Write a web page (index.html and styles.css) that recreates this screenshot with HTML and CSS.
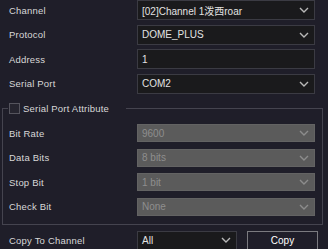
FILE: index.html
```html
<!DOCTYPE html>
<html lang="en">
<head>
<meta charset="UTF-8">
<meta name="viewport" content="width=device-width, initial-scale=1.0">
<title>PTZ Settings</title>
<link rel="stylesheet" href="styles.css">
</head>
<body>

<div class="panel">
    <div class="row">
        <div class="label">Channel</div>
        <div class="select">
            <span>[02]Channel 1泼西roar</span>
            <svg class="chev" width="10" height="6" viewBox="0 0 10 6"><polyline points="1,1 5,5 9,1"/></svg>
        </div>
    </div>
    <div class="row">
        <div class="label">Protocol</div>
        <div class="select">
            <span>DOME_PLUS</span>
            <svg class="chev" width="10" height="6" viewBox="0 0 10 6"><polyline points="1,1 5,5 9,1"/></svg>
        </div>
    </div>
    <div class="row">
        <div class="label">Address</div>
        <div class="select">
            <span>1</span>
        </div>
    </div>
    <div class="row">
        <div class="label">Serial Port</div>
        <div class="select">
            <span>COM2</span>
            <svg class="chev" width="10" height="6" viewBox="0 0 10 6"><polyline points="1,1 5,5 9,1"/></svg>
        </div>
    </div>

    <fieldset class="attr">
        <legend><span class="check"></span>Serial Port Attribute</legend>
        <div class="row">
            <div class="label">Bit Rate</div>
            <div class="select disabled">
                <span>9600</span>
                <svg class="chev" width="10" height="6" viewBox="0 0 10 6"><polyline points="1,1 5,5 9,1"/></svg>
            </div>
        </div>
        <div class="row">
            <div class="label">Data Bits</div>
            <div class="select disabled">
                <span>8 bits</span>
                <svg class="chev" width="10" height="6" viewBox="0 0 10 6"><polyline points="1,1 5,5 9,1"/></svg>
            </div>
        </div>
        <div class="row">
            <div class="label">Stop Bit</div>
            <div class="select disabled">
                <span>1 bit</span>
                <svg class="chev" width="10" height="6" viewBox="0 0 10 6"><polyline points="1,1 5,5 9,1"/></svg>
            </div>
        </div>
        <div class="row">
            <div class="label">Check Bit</div>
            <div class="select disabled">
                <span>None</span>
                <svg class="chev" width="10" height="6" viewBox="0 0 10 6"><polyline points="1,1 5,5 9,1"/></svg>
            </div>
        </div>
    </fieldset>

    <div class="row copy-row">
        <div class="label">Copy To Channel</div>
        <div class="select small">
            <span>All</span>
            <svg class="chev" width="10" height="6" viewBox="0 0 10 6"><polyline points="1,1 5,5 9,1"/></svg>
        </div>
        <div class="btn">Copy</div>
    </div>
</div>

</body>
</html>
```

FILE: styles.css
```css
body {
    margin: 0;
    padding: 0;
    background-color: #1f1e29;
    font-family: "Liberation Sans", "Noto Sans CJK SC", sans-serif;
    font-size: 9.5px;
    color: #d8d8d8;
    overflow: hidden;
}
.panel {
    width: 328px;
    margin-top: -2px;
}
.row {
    display: flex;
    align-items: center;
    height: 24.5px;
}
.label {
    width: 137px;
    padding-left: 9px;
    box-sizing: border-box;
    letter-spacing: 0.2px;
}
.select {
    width: 178px;
    height: 20px;
    box-sizing: border-box;
    display: flex;
    align-items: center;
    justify-content: space-between;
    padding: 0 5px 0 4px;
    background-color: #1a1a1c;
    border: 1px solid #3b3b43;
    color: #e2e2e2;
    font-size: 10px;
}
.chev {
    fill: none;
    stroke: #b8b8b8;
    stroke-width: 1.4;
}
.attr {
    margin: 5px 5px 0 2px;
    padding: 5px 0 5px 0;
    border: 1px solid #45444f;
}
.attr legend {
    display: flex;
    align-items: center;
    height: 15px;
    margin-left: 5px;
    padding: 0 17px 0 1px;
    letter-spacing: 0.2px;
}
.check {
    width: 11px;
    height: 11px;
    box-sizing: border-box;
    border: 1px solid #55545d;
    background-color: #26252f;
    margin-right: 3px;
}
.attr .label {
    width: 134px;
    padding-left: 6px;
}
.select.disabled {
    height: 18px;
    background-color: #5b5b5b;
    border-color: #636363;
    color: #8e8e8e;
}
.select.disabled .chev {
    stroke: #8c8c8c;
}
.copy-row {
    margin-top: 3px;
}
.select.small {
    width: 100px;
    height: 19px;
}
.btn {
    width: 71px;
    height: 19px;
    box-sizing: border-box;
    margin-left: 10px;
    border: 1px solid #7b7b80;
    color: #ffffff;
    font-size: 10px;
    display: flex;
    align-items: center;
    justify-content: center;
}
```
